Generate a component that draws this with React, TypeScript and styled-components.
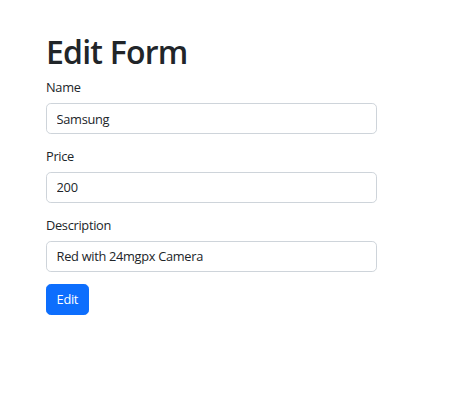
import React from "react";
import styled, { createGlobalStyle } from "styled-components";

const Global = createGlobalStyle`
  html, body { margin: 0; padding: 0; background: #fff; }
  body {
    font-family: "Segoe UI", "Open Sans", "Noto Sans", sans-serif;
    font-size: 12.8px;
    line-height: 1.5;
    letter-spacing: -0.3px;
    color: #212529;
  }
  * { box-sizing: border-box; }
`;

const Container = styled.div`
  width: 331px;
  margin-left: 46px;
  padding-top: 33px;
`;

const Title = styled.h1`
  margin: 0 0 6.4px;
  font-size: 32px;
  font-weight: 600;
  line-height: 1.2;
  letter-spacing: -0.8px;
`;

const Group = styled.div`
  margin-bottom: 12.8px;
`;

const Label = styled.label`
  display: block;
  margin-bottom: 6.4px;
`;

const Input = styled.input`
  display: block;
  width: 100%;
  height: 30.5px;
  padding: 4.8px 9.6px;
  font: inherit;
  letter-spacing: inherit;
  color: #212529;
  background: #fff;
  border: 1px solid #ced4da;
  border-radius: 4.8px;
  outline: none;
`;

const Button = styled.button`
  display: inline-block;
  padding: 4.8px 9.6px;
  font: inherit;
  letter-spacing: inherit;
  color: #fff;
  background: #0d6efd;
  border: 1px solid #0d6efd;
  border-radius: 4.8px;
  cursor: pointer;
`;

const fields = [
  { label: "Name", value: "Samsung" },
  { label: "Price", value: "200" },
  { label: "Description", value: "Red with 24mgpx Camera" },
];

export default function App() {
  return (
    <>
      <Global />
      <Container>
        <Title>Edit Form</Title>
        {fields.map((f) => (
          <Group key={f.label}>
            <Label>{f.label}</Label>
            <Input defaultValue={f.value} />
          </Group>
        ))}
        <Button>Edit</Button>
      </Container>
    </>
  );
}
